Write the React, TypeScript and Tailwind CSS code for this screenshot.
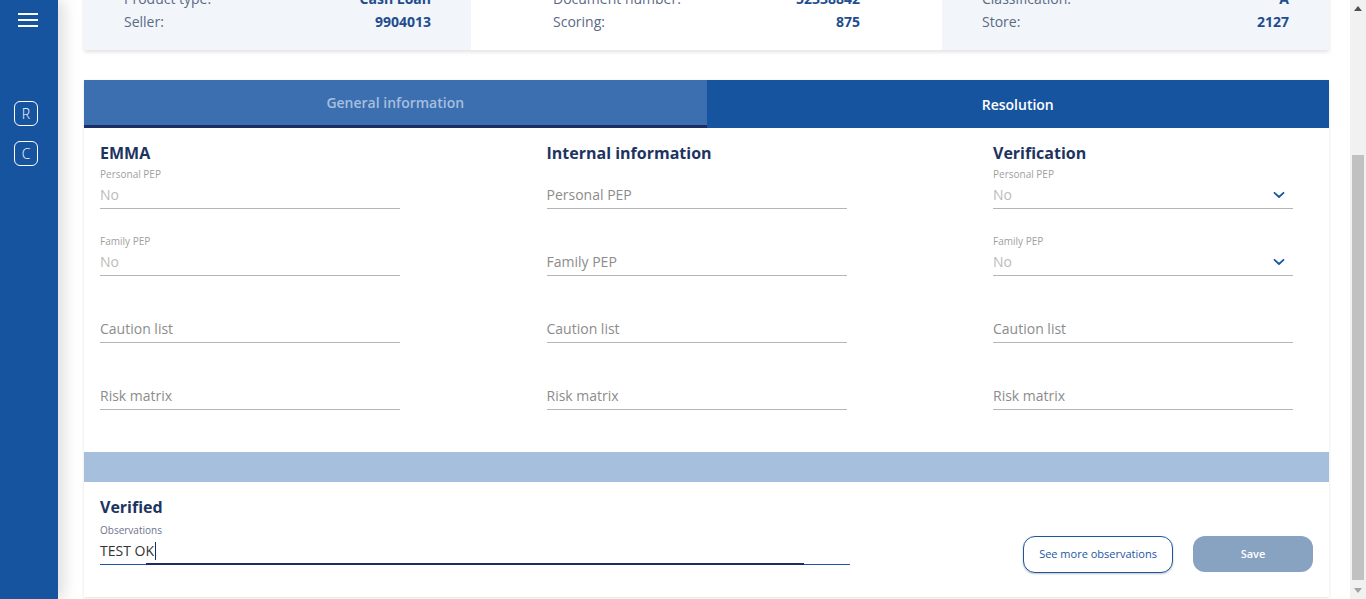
import { useEffect, useRef } from "react";

const FONT = { fontFamily: '"Open Sans", "Liberation Sans", sans-serif' };

const summary = [
  {
    bg: "bg-[#f2f5fa]",
    pad: "px-10",
    rows: [
      ["Request number:", "1048823"],
      ["Customer:", "Emma Torres"],
      ["Amount:", "3.500"],
      ["Product type:", "Cash Loan"],
      ["Seller:", "9904013"],
    ],
  },
  {
    bg: "bg-white",
    pad: "px-[82px]",
    rows: [
      ["Request date:", "12/04/2023"],
      ["Term:", "24"],
      ["Channel:", "Store"],
      ["Document number:", "52338842"],
      ["Scoring:", "875"],
    ],
  },
  {
    bg: "bg-[#f2f5fa]",
    pad: "px-10",
    rows: [
      ["Status:", "Pending"],
      ["Branch:", "Madrid"],
      ["Segment:", "Retail"],
      ["Classification:", "A"],
      ["Store:", "2127"],
    ],
  },
];

function Chevron() {
  return (
    <svg width="12" height="8" viewBox="0 0 12 8" className="text-[#1b56a3]">
      <path d="M1.5 1.8 6 6 10.5 1.8" fill="none" stroke="currentColor" strokeWidth="1.8" strokeLinecap="round" strokeLinejoin="round" />
    </svg>
  );
}

function Field({
  label,
  value,
  placeholder,
  select,
}: {
  label?: string;
  value?: string;
  placeholder?: string;
  select?: boolean;
}) {
  return (
    <div className="w-[300px] mb-[25px]">
      <div className="h-[14px] text-[10px] leading-[14px] text-[#a0a0a0]">{label}</div>
      <div className="h-[28px] border-b border-[#b5b5b5] flex items-center justify-between">
        {value ? (
          <span className="text-[14px] text-[#bcbcbc]">{value}</span>
        ) : (
          <span className="text-[14px] text-[#8c8c8c]">{placeholder}</span>
        )}
        {select && (
          <span className="mr-2">
            <Chevron />
          </span>
        )}
      </div>
    </div>
  );
}

function ScrollBar() {
  return (
    <div className="w-[16px] shrink-0 bg-[#f1f1f1] flex flex-col">
      <div className="h-[17px] flex items-center justify-center">
        <svg width="8" height="5" viewBox="0 0 8 5">
          <path d="M0 5 4 0 8 5Z" fill="#505050" />
        </svg>
      </div>
      <div className="flex-1 flex flex-col px-[2px] pt-[138px] pb-[2px]">
        <div className="flex-1 bg-[#c1c1c1]" />
      </div>
      <div className="h-[17px] flex items-center justify-center">
        <svg width="8" height="5" viewBox="0 0 8 5">
          <path d="M0 0 8 0 4 5Z" fill="#a3a3a3" />
        </svg>
      </div>
    </div>
  );
}

export default function App() {
  const scroller = useRef<HTMLDivElement>(null);

  useEffect(() => {
    if (scroller.current) scroller.current.scrollTop = scroller.current.scrollHeight;
  }, []);

  return (
    <div className="flex h-screen overflow-hidden bg-white" style={FONT}>
      <aside className="w-[58px] shrink-0 bg-[#17549f] relative z-10 shadow-[6px_0_14px_rgba(0,0,0,0.13)] flex flex-col">
        <button className="mt-[13px] ml-[18px] flex flex-col gap-[4px]">
          <span className="block w-[20px] h-[2px] bg-white" />
          <span className="block w-[20px] h-[2px] bg-white" />
          <span className="block w-[20px] h-[2px] bg-white" />
        </button>
        <div className="mt-[74px] ml-[14px] flex flex-col gap-[15px]">
          <div className="w-[24px] h-[25px] rounded-[6px] border border-white text-white text-[14px] font-light flex items-center justify-center">
            R
          </div>
          <div className="w-[24px] h-[25px] rounded-[6px] border border-white text-white text-[14px] font-light flex items-center justify-center">
            C
          </div>
        </div>
      </aside>

      <div ref={scroller} className="flex-1 overflow-y-scroll">
        <div className="pl-[26px] pr-[21px] pt-6 pb-[2px]">
          <div className="h-[48px] mb-4 flex items-center">
            <h1 className="text-[20px] font-bold text-[#1d3461]">Request detail</h1>
          </div>

          <div className="grid grid-cols-[387px_471px_387px] shadow-[0_2px_4px_rgba(0,0,0,0.12)]">
            {summary.map((col, i) => (
              <div key={i} className={`${col.bg} ${col.pad} pt-[27px] pb-[17px]`}>
                {col.rows.map(([k, v]) => (
                  <div key={k} className="h-[23px] flex items-center justify-between text-[14px]">
                    <span className="text-[#5b6a84]">{k}</span>
                    <span className="font-bold text-[#1f4d8f]">{v}</span>
                  </div>
                ))}
              </div>
            ))}
          </div>

          <div className="mt-[30px] bg-white shadow-[0_1px_3px_rgba(0,0,0,0.12)]">
            <div className="flex h-[48px]">
              <div className="flex-1 bg-[#3c6fb0] border-b-[3px] border-[#1a2d66] flex items-center justify-center text-[14px] font-semibold text-[#a7bfdf]">
                General information
              </div>
              <div className="flex-1 bg-[#17549f] flex items-center justify-center text-[14px] font-semibold text-white">
                Resolution
              </div>
            </div>

            <div className="pl-4 pr-9 pt-[13px] pb-[17px] flex justify-between">
              <div>
                <h2 className="text-[16px] leading-6 font-bold text-[#1d3461] mb-0.5">EMMA</h2>
                <Field label="Personal PEP" value="No" />
                <Field label="Family PEP" value="No" />
                <Field placeholder="Caution list" />
                <Field placeholder="Risk matrix" />
              </div>
              <div>
                <h2 className="text-[16px] leading-6 font-bold text-[#1d3461] mb-0.5">Internal information</h2>
                <Field placeholder="Personal PEP" />
                <Field placeholder="Family PEP" />
                <Field placeholder="Caution list" />
                <Field placeholder="Risk matrix" />
              </div>
              <div>
                <h2 className="text-[16px] leading-6 font-bold text-[#1d3461] mb-0.5">Verification</h2>
                <Field label="Personal PEP" value="No" select />
                <Field label="Family PEP" value="No" select />
                <Field placeholder="Caution list" />
                <Field placeholder="Risk matrix" />
              </div>
            </div>

            <div className="h-[30px] bg-[#a6bfdc]" />

            <div className="pl-4 pr-4 pt-[13px] pb-[32px] flex items-end justify-between">
              <div className="w-[750px]">
                <h2 className="text-[16px] leading-6 font-bold text-[#1d3461] mb-1">Verified</h2>
                <div className="h-[14px] text-[10px] leading-[14px] text-[#6b7390]">Observations</div>
                <div className="relative h-[28px] flex items-center border-b border-[#1b56a3]">
                  <span className="text-[14px] text-[#333]">TEST OK</span>
                  <span className="ml-[1px] w-px h-[18px] bg-[#1a2d66]" />
                  <span className="absolute left-[46px] right-[46px] -bottom-px h-[2px] bg-[#1a2d66]" />
                </div>
              </div>
              <div className="flex gap-5 mb-[-8px]">
                <button className="w-[150px] h-[37px] rounded-[12px] border border-[#1b56a3] bg-white text-[11px] text-[#1b56a3] shadow-[0_1px_2px_rgba(0,0,0,0.25)]">
                  See more observations
                </button>
                <button className="w-[120px] h-[36px] rounded-[12px] bg-[#88a2c2] text-[11px] font-semibold text-white">
                  Save
                </button>
              </div>
            </div>
          </div>
        </div>
      </div>

      <ScrollBar />
    </div>
  );
}
